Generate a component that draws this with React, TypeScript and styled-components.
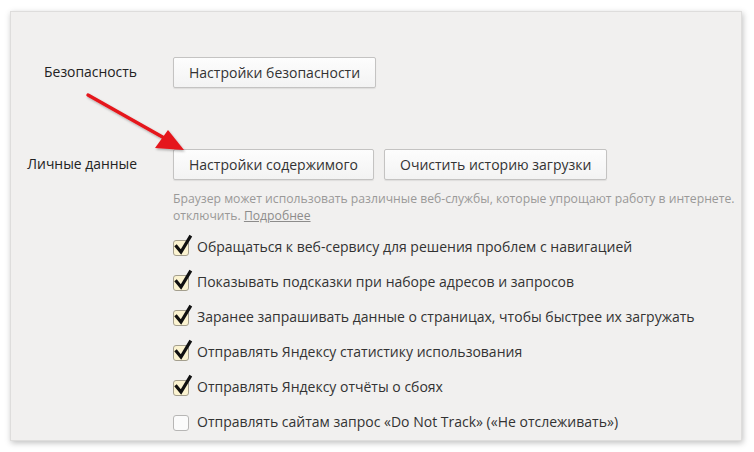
import React from "react";
import styled, { createGlobalStyle } from "styled-components";

const Global = createGlobalStyle`
  html, body { margin: 0; padding: 0; background: #ffffff; }
  body { font-family: "Open Sans", "Noto Sans", sans-serif; color: #333; }
`;

const Page = styled.div`
  width: 754px;
  height: 452px;
  padding: 11px 0 0 10px;
  box-sizing: border-box;
`;

const Panel = styled.div`
  position: relative;
  width: 732px;
  height: 430px;
  box-sizing: border-box;
  background: #f1f0ef;
  border: 1px solid #dedddc;
  box-shadow: 1px 2px 6px rgba(0, 0, 0, 0.25);
  overflow: hidden;
  padding-top: 45px;
`;

const Section = styled.div<{ $top?: number }>`
  display: grid;
  grid-template-columns: 126px 1fr;
  column-gap: 36px;
  align-items: start;
  margin-top: ${(p) => p.$top ?? 0}px;
`;

const Label = styled.div`
  text-align: right;
  font-size: 13.9px;
  line-height: 30px;
  color: #222;
  white-space: nowrap;
`;

const Controls = styled.div`
  display: flex;
  flex-direction: column;
  min-width: 0;
`;

const ButtonRow = styled.div`
  display: flex;
  gap: 10px;
`;

const Button = styled.button`
  height: 31px;
  padding: 0 15px;
  box-sizing: border-box;
  border: 1px solid #c4c3c2;
  border-radius: 2px;
  background: linear-gradient(#fdfdfd, #f3f3f3);
  box-shadow: 0 1px 1px rgba(0, 0, 0, 0.08);
  font-family: "Open Sans", "Noto Sans", sans-serif;
  font-size: 14px;
  color: #333;
  white-space: nowrap;
  cursor: pointer;
`;

const Desc = styled.div`
  margin-top: 10px;
  font-size: 12.2px;
  line-height: 17px;
  color: #9a9998;
  white-space: nowrap;
`;

const More = styled.span`
  text-decoration: underline;
  color: #8d8c8b;
`;

const List = styled.div`
  margin-top: 5px;
  display: flex;
  flex-direction: column;
`;

const Row = styled.label`
  display: flex;
  align-items: center;
  gap: 8px;
  height: 35px;
  font-size: 14px;
  color: #333;
  white-space: nowrap;
`;

const Box = styled.span<{ $checked?: boolean }>`
  position: relative;
  flex: none;
  width: 16px;
  height: 16px;
  box-sizing: border-box;
  border: 1px solid ${(p) => (p.$checked ? "#a49f8e" : "#b7b6b5")};
  border-radius: 3px;
  background: ${(p) => (p.$checked ? "#fbf3d0" : "#fbfbfb")};
  margin-top: 2px;
`;

const Tick = styled.svg`
  position: absolute;
  left: 0px;
  top: -7px;
  width: 18px;
  height: 22px;
  overflow: visible;
`;

const Arrow = styled.svg`
  position: absolute;
  left: 0;
  top: 0;
  width: 732px;
  height: 430px;
  pointer-events: none;
`;

const items: [string, boolean][] = [
  ["Обращаться к веб-сервису для решения проблем с навигацией", true],
  ["Показывать подсказки при наборе адресов и запросов", true],
  ["Заранее запрашивать данные о страницах, чтобы быстрее их загружать", true],
  ["Отправлять Яндексу статистику использования", true],
  ["Отправлять Яндексу отчёты о сбоях", true],
  ["Отправлять сайтам запрос «Do Not Track» («Не отслеживать»)", false],
];

export default function App() {
  return (
    <>
      <Global />
      <Page>
        <Panel>
          <Section>
            <Label>Безопасность</Label>
            <Controls>
              <ButtonRow>
                <Button>Настройки безопасности</Button>
              </ButtonRow>
            </Controls>
          </Section>
          <Section $top={61}>
            <Label>Личные данные</Label>
            <Controls>
              <ButtonRow>
                <Button>Настройки содержимого</Button>
                <Button>Очистить историю загрузки</Button>
              </ButtonRow>
              <Desc>
                Браузер может использовать различные веб-службы, которые упрощают работу в интернете.
                <br />
                отключить. <More>Подробнее</More>
              </Desc>
              <List>
                {items.map(([t, c]) => (
                  <Row key={t}>
                    <Box $checked={c}>
                      {c && (
                        <Tick viewBox="0 0 18 22">
                          <path
                            d="M2.5 12.5 L7 18 L16 3"
                            fill="none"
                            stroke="#111"
                            strokeWidth="3.2"
                            strokeLinecap="square"
                            strokeLinejoin="miter"
                          />
                        </Tick>
                      )}
                    </Box>
                    {t}
                  </Row>
                ))}
              </List>
            </Controls>
          </Section>
          <Arrow viewBox="0 0 732 430">
            <defs>
              <filter id="sh" x="-20%" y="-20%" width="140%" height="140%">
                <feDropShadow dx="1" dy="1.5" stdDeviation="1" floodColor="#000" floodOpacity="0.3" />
              </filter>
            </defs>
            <g filter="url(#sh)">
              <line x1="77" y1="83" x2="155" y2="127" stroke="#e5141a" strokeWidth="3.4" strokeLinecap="round" />
              <polygon points="173,138 144,136 157,118" fill="#e5141a" />
            </g>
          </Arrow>
        </Panel>
      </Page>
    </>
  );
}
